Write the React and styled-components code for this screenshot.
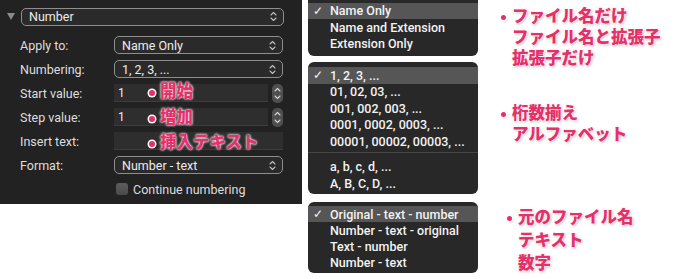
import React from "react";
import styled, { createGlobalStyle } from "styled-components";

const Global = createGlobalStyle`
  html, body { margin: 0; padding: 0; background: #ffffff; }
  body { font-family: Roboto, "Liberation Sans", sans-serif; }
  * { box-sizing: border-box; }
`;

const Page = styled.div`
  display: flex;
  align-items: flex-start;
  width: 675px;
  height: 279px;
  overflow: hidden;
  background: #fff;
`;

const PanelWrap = styled.div`
  position: relative;
  width: 302px;
  height: 204px;
  flex: none;
`;

const Panel = styled.div`
  width: 302px;
  height: 204px;
  background: #222223;
  padding-top: 8px;
  color: #e2e2e2;
  font-size: 12px;
`;

const Header = styled.div`
  display: flex;
  align-items: center;
  height: 17px;
  padding-left: 7px;
  gap: 6px;
`;

const Triangle = styled.div`
  width: 0;
  height: 0;
  border-left: 4px solid transparent;
  border-right: 4px solid transparent;
  border-top: 7px solid #8a8a8a;
  flex: none;
`;

const Form = styled.div`
  margin-top: 8px;
  display: flex;
  flex-direction: column;
`;

const Row = styled.div`
  display: grid;
  grid-template-columns: 94px 169px;
  align-items: center;
  height: 24px;
  padding-left: 20px;
`;

const Label = styled.span`
  color: #dedede;
  font-size: 12.5px;
`;

const Popup = styled.div`
  display: flex;
  align-items: center;
  justify-content: space-between;
  height: 18px;
  width: ${(p) => p.$width || "169px"};
  border: 1px solid #8e8e8e;
  border-radius: 5px;
  background: #2a2a2b;
  padding: 0 6px 0 7px;
  color: #ececec;
  font-size: 12.5px;
  flex: none;
`;

const FieldRow = styled.div`
  display: flex;
  align-items: center;
  gap: 4px;
`;

const Field = styled.div`
  display: flex;
  align-items: center;
  height: 18px;
  width: ${(p) => p.$w};
  background: #2e2e2f;
  border-bottom: 1px solid #3c3c3c;
  padding-left: 4px;
  color: #ececec;
  font-size: 12px;
`;

const Stepper = styled.div`
  width: 11px;
  height: 19px;
  border-radius: 5px;
  background: #4f4f50;
  display: flex;
  align-items: center;
  justify-content: center;
`;

const CheckRow = styled.div`
  display: flex;
  align-items: center;
  height: 24px;
  padding-left: 116px;
  gap: 5px;
`;

const Checkbox = styled.div`
  width: 12px;
  height: 12px;
  border-radius: 3px;
  background: linear-gradient(#5d5d5e, #4a4a4b);
`;

const Menus = styled.div`
  margin-left: 6px;
  width: 170px;
  flex: none;
  display: flex;
  flex-direction: column;
`;

const Menu = styled.div`
  background: #282828;
  border-radius: ${(p) => (p.$cut ? "0 0 6px 6px" : "6px")};
  padding: ${(p) => p.$pad};
  margin-top: ${(p) => p.$mt || "0px"};
  color: #f2f2f2;
  font-size: 12.5px;
  font-weight: 500;
`;

const Item = styled.div`
  display: flex;
  align-items: center;
  height: ${(p) => p.$h || "16.5px"};
  padding-left: 5px;
  background: ${(p) => (p.$sel ? "#565657" : "transparent")};
  white-space: nowrap;
`;

const Check = styled.span`
  width: 17px;
  flex: none;
  font-size: 12px;
`;

const Sep = styled.div`
  height: 1px;
  background: #464647;
  margin: 2px 0 6px;
`;

const pinkText = `
  color: #e5306b;
  font-family: "Noto Sans CJK JP", sans-serif;
  font-weight: 800;
  font-size: 16.5px;
  text-shadow: 0 0 2px #fff, 0 0 3px #fff, 1px 1px 3px rgba(0,0,0,0.35);
  white-space: nowrap;
`;

const Dot = styled.span`
  display: inline-flex;
  align-items: center;
  justify-content: center;
  width: ${(p) => p.$w || "17px"};
  vertical-align: middle;
  &::before {
    content: "";
    width: ${(p) => p.$size || "6px"};
    height: ${(p) => p.$size || "6px"};
    border-radius: 50%;
    background: #e5306b;
    box-shadow: 0 0 0 1.5px #fff, 1px 1px 3px rgba(0, 0, 0, 0.35);
  }
`;

const Note = styled.div`
  position: absolute;
  left: 143px;
  top: ${(p) => p.$top};
  line-height: 20px;
  ${pinkText}
`;

const Notes = styled.div`
  flex: 1;
  display: flex;
  flex-direction: column;
  padding-left: 17px;
`;

const NoteGroup = styled.div`
  margin-left: ${(p) => p.$ml || "0px"};
  margin-top: ${(p) => p.$mt};
  line-height: ${(p) => p.$lh};
  ${pinkText}
`;

const Indent = styled.div`
  padding-left: 17px;
`;

const UpDown = () => (
  <svg width="7" height="11" viewBox="0 0 7 11">
    <path d="M1 4 L3.5 1.5 L6 4" fill="none" stroke="#bdbdbd" strokeWidth="1.1" strokeLinecap="round" strokeLinejoin="round" />
    <path d="M1 7 L3.5 9.5 L6 7" fill="none" stroke="#bdbdbd" strokeWidth="1.1" strokeLinecap="round" strokeLinejoin="round" />
  </svg>
);

const StepIcon = () => (
  <svg width="7" height="15" viewBox="0 0 7 15">
    <path d="M1 5 L3.5 2.5 L6 5" fill="none" stroke="#d4d4d4" strokeWidth="1.1" strokeLinecap="round" strokeLinejoin="round" />
    <path d="M1 10 L3.5 12.5 L6 10" fill="none" stroke="#d4d4d4" strokeWidth="1.1" strokeLinecap="round" strokeLinejoin="round" />
  </svg>
);

const MenuList = ({ items, selected, h }) =>
  items.map((t, i) => (
    <Item key={t} $sel={i === selected} $h={h}>
      <Check>{i === selected ? "✓" : ""}</Check>
      {t}
    </Item>
  ));

export default function App() {
  return (
    <Page>
      <Global />
      <PanelWrap>
        <Panel>
          <Header>
            <Triangle />
            <Popup $width="263px">
              <span>Number</span>
              <UpDown />
            </Popup>
          </Header>
          <Form>
            <Row>
              <Label>Apply to:</Label>
              <Popup>
                <span>Name Only</span>
                <UpDown />
              </Popup>
            </Row>
            <Row>
              <Label>Numbering:</Label>
              <Popup>
                <span>1, 2, 3, ...</span>
                <UpDown />
              </Popup>
            </Row>
            <Row>
              <Label>Start value:</Label>
              <FieldRow>
                <Field $w="154px">1</Field>
                <Stepper><StepIcon /></Stepper>
              </FieldRow>
            </Row>
            <Row>
              <Label>Step value:</Label>
              <FieldRow>
                <Field $w="154px">1</Field>
                <Stepper><StepIcon /></Stepper>
              </FieldRow>
            </Row>
            <Row>
              <Label>Insert text:</Label>
              <Field $w="169px" />
            </Row>
            <Row>
              <Label>Format:</Label>
              <Popup>
                <span>Number - text</span>
                <UpDown />
              </Popup>
            </Row>
            <CheckRow>
              <Checkbox />
              <Label>Continue numbering</Label>
            </CheckRow>
          </Form>
        </Panel>
        <Note $top="80px"><Dot />開始</Note>
        <Note $top="106px"><Dot />増加</Note>
        <Note $top="131px"><Dot />挿入テキスト</Note>
      </PanelWrap>

      <Menus>
        <Menu $cut $pad="2.5px 0 4px">
          <MenuList items={["Name Only", "Name and Extension", "Extension Only"]} selected={0} />
        </Menu>
        <Menu $mt="6px" $pad="5px 0 2px">
          <MenuList
            items={["1, 2, 3, ...", "01, 02, 03, ...", "001, 002, 003, ...", "0001, 0002, 0003, ...", "00001, 00002, 00003, ..."]}
            selected={0}
          />
          <Sep />
          <MenuList items={["a, b, c, d, ...", "A, B, C, D, ..."]} selected={-1} />
        </Menu>
        <Menu $mt="8.5px" $pad="4px 0 3px">
          <MenuList
            items={["Original - text - number", "Number - text - original", "Text - number", "Number - text"]}
            selected={0}
            h="16px"
          />
        </Menu>
      </Menus>

      <Notes>
        <NoteGroup $mt="5px" $lh="21px">
          <Dot $size="5px" />ファイル名だけ
          <Indent>ファイル名と拡張子</Indent>
          <Indent>拡張子だけ</Indent>
        </NoteGroup>
        <NoteGroup $mt="34px" $lh="21px">
          <Dot $size="5px" />桁数揃え
          <Indent>アルファベット</Indent>
        </NoteGroup>
        <NoteGroup $mt="61px" $lh="23px" $ml="6px">
          <Dot $size="5px" />元のファイル名
          <Indent>テキスト</Indent>
          <Indent>数字</Indent>
        </NoteGroup>
      </Notes>
    </Page>
  );
}
